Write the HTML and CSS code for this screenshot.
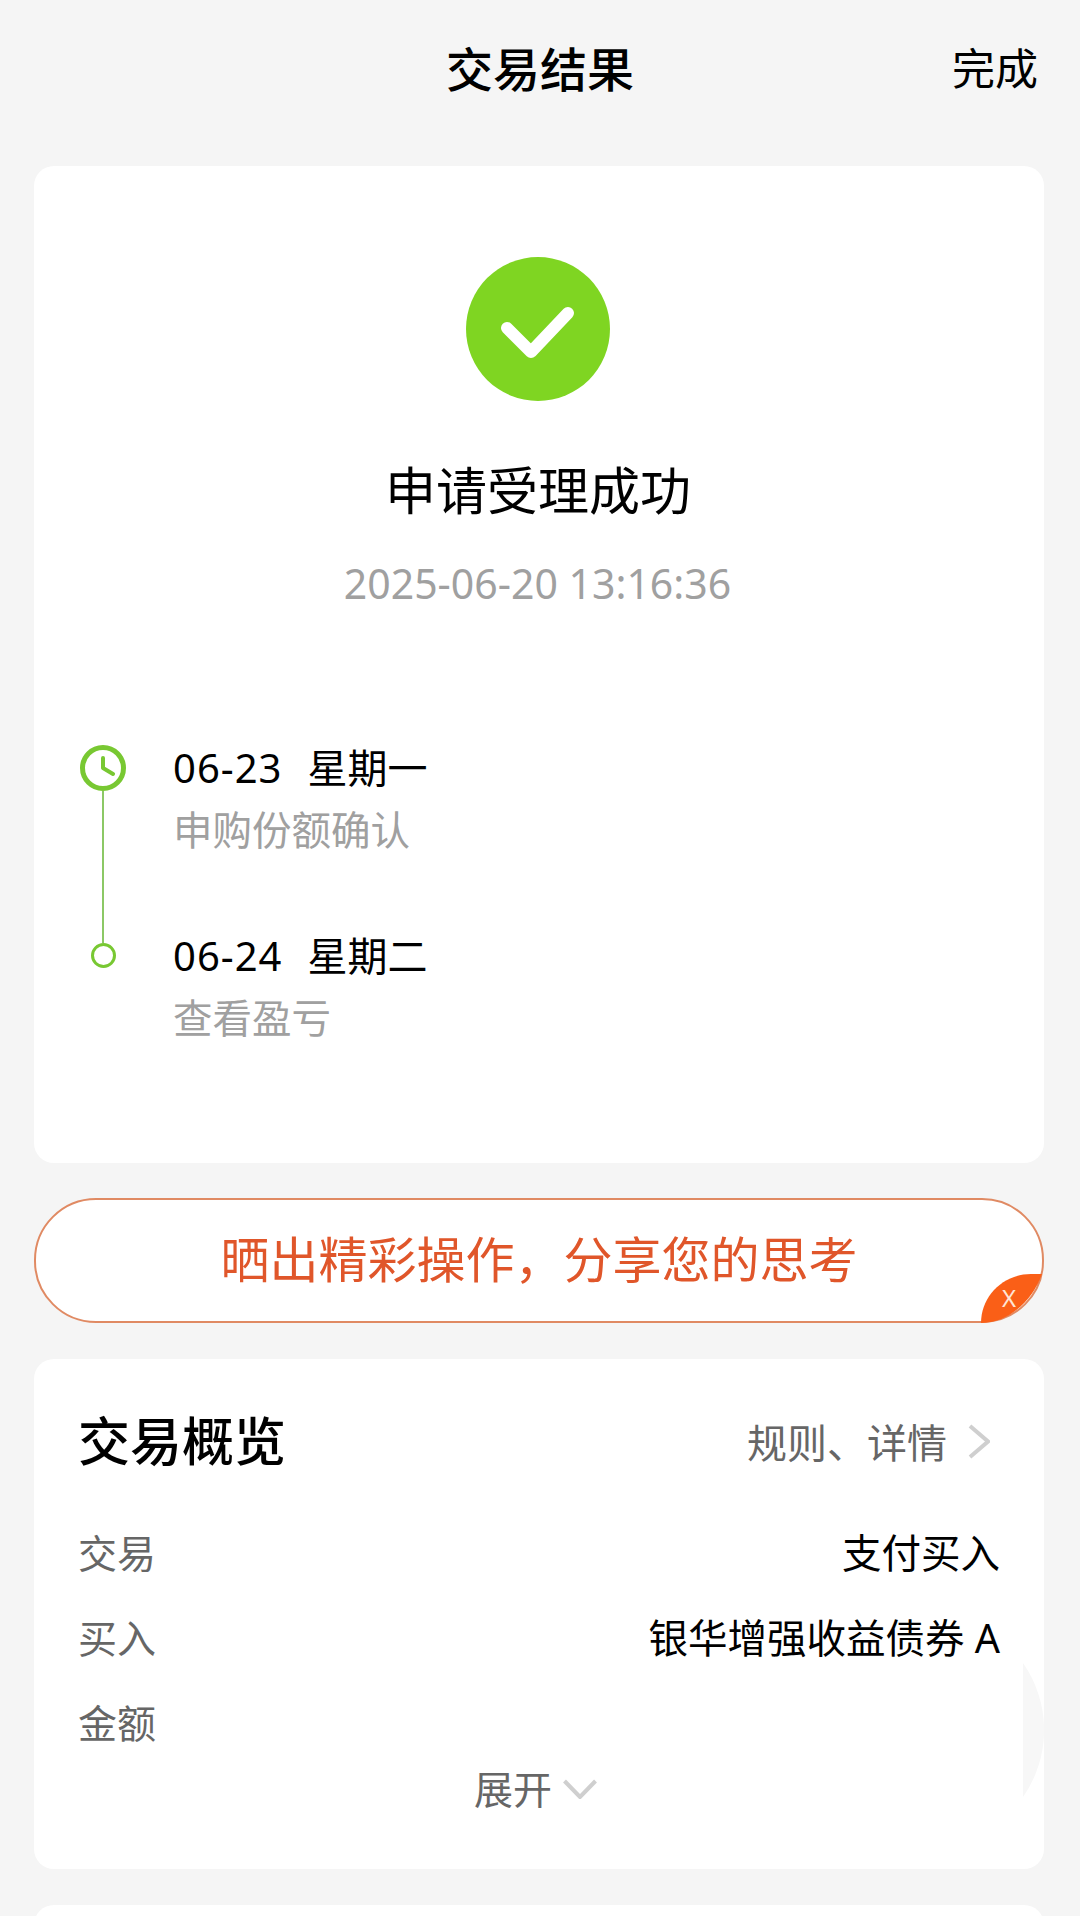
FILE: index.html
```html
<!DOCTYPE html>
<html lang="zh-CN">
<head>
    <meta charset="utf-8">
    <title>交易结果</title>
    <meta name="viewport" content="width=device-width, initial-scale=1">
    <link rel="stylesheet" href="styles.css">
</head>
<body>
    <header class="top-bar">
        <span></span>
        <h1 class="top-title">交易结果</h1>
        <a class="top-done">完成</a>
    </header>

    <section class="card result-card">
        <svg class="success-icon" viewBox="0 0 144 144">
            <circle cx="72" cy="72" r="72" fill="#7fd522"/>
            <polyline points="41,71 65,95 102,56" fill="none" stroke="#fff" stroke-width="12" stroke-linecap="round" stroke-linejoin="round"/>
        </svg>
        <h2 class="result-title">申请受理成功</h2>
        <div class="result-time">2025-06-20 13:16:36</div>

        <div class="timeline">
            <div class="step step-first">
                <div class="rail">
                    <svg class="clock" viewBox="0 0 46 46">
                        <circle cx="23" cy="23" r="20.5" fill="none" stroke="#78c832" stroke-width="5"/>
                        <polyline points="23,13 23,23 33,29" fill="none" stroke="#78c832" stroke-width="4" stroke-linecap="round" stroke-linejoin="round"/>
                    </svg>
                    <div class="rail-line"></div>
                </div>
                <div class="step-text">
                    <div class="step-date"><span class="step-day">06-23</span><span>星期一</span></div>
                    <div class="step-desc">申购份额确认</div>
                </div>
            </div>
            <div class="step">
                <div class="rail">
                    <div class="rail-dot"></div>
                </div>
                <div class="step-text">
                    <div class="step-date"><span class="step-day">06-24</span><span>星期二</span></div>
                    <div class="step-desc">查看盈亏</div>
                </div>
            </div>
        </div>
    </section>

    <div class="share-banner">
        <span>晒出精彩操作，分享您的思考</span>
        <div class="share-close">
            <svg viewBox="0 0 61 49">
                <path d="M0 49C0 22 22 0 50 0L61 0C52 26 28 49 0 49Z" fill="#fa5f17"/>
            </svg>
            <span class="share-x">X</span>
        </div>
    </div>

    <section class="card overview-card">
        <div class="overview-head">
            <h2 class="overview-title">交易概览</h2>
            <a class="overview-link">
                规则、详情
                <svg class="chevron-right" viewBox="0 0 22 35">
                    <polyline points="2,2 20,17.5 2,33" fill="none" stroke="#cfcfcf" stroke-width="4"/>
                </svg>
            </a>
        </div>
        <div class="row"><span class="row-label">交易</span><span class="row-value">支付买入</span></div>
        <div class="row"><span class="row-label">买入</span><span class="row-value">银华增强收益债券 A</span></div>
        <div class="row"><span class="row-label">金额</span></div>
        <a class="expand">
            展开
            <svg class="chevron-down" viewBox="0 0 35 20">
                <polyline points="2,2 17.5,18 33,2" fill="none" stroke="#cfcfcf" stroke-width="4"/>
            </svg>
        </a>
        <svg class="side-tab" viewBox="0 0 21 134">
            <path d="M0 0A117 117 0 0 1 0 134Z" fill="#f7f7f7"/>
        </svg>
    </section>

    <section class="card next-card"></section>
</body>
</html>
```

FILE: styles.css
```css
* {
    margin: 0;
    padding: 0;
    box-sizing: border-box;
}

html, body {
    height: 1916px;
    overflow: hidden;
}

body {
    background-color: #f5f5f5;
    color: #000;
    font-family: "Noto Sans", "Noto Sans CJK SC", sans-serif;
    padding: 0 36px 0 34px;
}

h1, h2 {
    font-weight: 400;
}

.top-bar {
    display: grid;
    grid-template-columns: 1fr auto 1fr;
    align-items: center;
    height: 166px;
    padding: 0 6px 28px 8px;
}

.top-title {
    font-size: 47px;
    font-weight: 500;
    line-height: 60px;
}

.top-done {
    justify-self: end;
    font-size: 43px;
    line-height: 60px;
}

.card {
    background-color: #fff;
    border-radius: 20px;
}

.result-card {
    display: flex;
    flex-direction: column;
    height: 997px;
    padding: 91px 46px 0;
}

.success-icon {
    display: block;
    width: 144px;
    height: 144px;
    align-self: center;
    margin-left: -2px;
}

.result-title {
    margin-top: 59px;
    margin-right: 2px;
    font-size: 51px;
    line-height: 60px;
    text-align: center;
}

.result-time {
    margin-top: 38px;
    margin-right: 3px;
    font-size: 41px;
    line-height: 50px;
    color: #a0a0a0;
    text-align: center;
}

.timeline {
    margin-top: 137px;
}

.step {
    display: flex;
    gap: 47px;
}

.step-first {
    height: 198px;
}

.rail {
    display: flex;
    flex-direction: column;
    align-items: center;
    width: 46px;
}

.clock {
    display: block;
    width: 46px;
    height: 46px;
    flex: none;
}

.rail-line {
    flex: 1;
    width: 2px;
    background-color: #8cc866;
}

.rail-dot {
    width: 25px;
    height: 25px;
    border: 3px solid #78c832;
    border-radius: 50%;
}

.step-first .step-text {
    padding-top: 10px;
}

.step-date {
    display: flex;
    gap: 25px;
    font-size: 40px;
    line-height: 26px;
}

.step-day {
    letter-spacing: 1px;
}

.step-desc {
    margin-top: 26px;
    font-size: 39.5px;
    line-height: 46px;
    color: #a0a0a0;
}

.share-banner {
    position: relative;
    display: flex;
    align-items: center;
    justify-content: center;
    height: 125px;
    margin-top: 35px;
    padding: 0 0 8px 0;
    background-color: #fff;
    border: 2px solid #e08a63;
    border-radius: 62px;
    font-size: 49px;
    color: #e0562a;
}

.share-close {
    position: absolute;
    right: 0;
    bottom: -2px;
    width: 61px;
    height: 49px;
}

.share-close svg {
    display: block;
    width: 61px;
    height: 49px;
}

.share-x {
    position: absolute;
    left: 21px;
    top: 9px;
    font-size: 24px;
    line-height: 30px;
    color: #ffe5d5;
}

.overview-card {
    position: relative;
    height: 510px;
    margin-top: 36px;
    padding: 52px 44px 0 44px;
}

.overview-head {
    display: flex;
    align-items: center;
    justify-content: space-between;
    height: 60px;
    margin-bottom: 37px;
}

.overview-title {
    font-size: 52px;
    font-weight: 500;
    line-height: 60px;
}

.overview-link {
    display: flex;
    align-items: center;
    gap: 21px;
    margin-right: 10px;
    font-size: 40px;
    color: #666;
}

.chevron-right {
    width: 22px;
    height: 35px;
}

.row {
    display: flex;
    align-items: center;
    justify-content: space-between;
    height: 85px;
    font-size: 39px;
}

.row-label {
    color: #666;
}

.row-value {
    font-size: 39.5px;
}

.expand {
    display: flex;
    align-items: center;
    justify-content: center;
    gap: 10px;
    height: 50px;
    margin: -1px 6px 0 0;
    font-size: 39px;
    color: #666;
}

.chevron-down {
    width: 36px;
    height: 20px;
    margin-top: 4px;
}

.side-tab {
    position: absolute;
    top: 304px;
    right: 0;
    width: 21px;
    height: 134px;
}

.next-card {
    height: 60px;
    margin-top: 36px;
}
```
